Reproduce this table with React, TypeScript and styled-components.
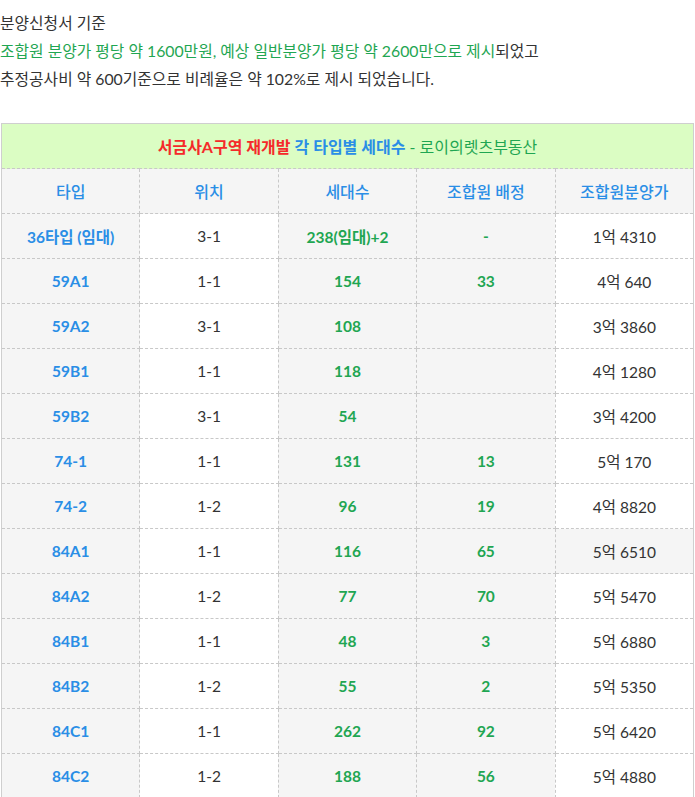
import React from "react";
import styled, { createGlobalStyle } from "styled-components";

const GlobalStyle = createGlobalStyle`
  body {
    margin: 0;
    background: #fff;
    font-family: "Lato", "Noto Sans CJK KR", sans-serif;
    color: #333;
  }
`;

const Page = styled.div`
  padding: 9px 0 0;
`;

const Intro = styled.p`
  margin: 0 0 30px;
  font-size: 15.8px;
  line-height: 28px;
  color: #333;
`;

const Green = styled.span`
  color: #1fa652;
`;

const TableWrap = styled.div`
  padding: 0 1px;
`;

const Table = styled.table`
  width: 100%;
  border-collapse: collapse;
  table-layout: fixed;
  border: 1px solid #cfcfcf;
  font-size: 15.5px;
`;

const TitleCell = styled.td`
  height: 44px;
  background: #dbfdc3;
  text-align: center;
  border-bottom: 1px dashed #c8c8c8;
  padding: 0;
  font-size: 16px;
`;

const Tone = styled.span<{ $c: string; $bold?: boolean }>`
  color: ${(p) => p.$c};
  font-weight: ${(p) => (p.$bold ? 700 : 400)};
`;

const Th = styled.th`
  height: 44px;
  background: #f5f5f5;
  color: #2a8ee6;
  font-weight: 500;
  font-size: 16px;
  border: 1px dashed #c8c8c8;
  border-top: none;
  padding: 0;
`;

type Kind = "type" | "plain" | "num";

const Td = styled.td<{ $kind: Kind; $gray: boolean }>`
  height: 44px;
  text-align: center;
  padding: 0;
  border: 1px dashed #c8c8c8;
  background: ${(p) => (p.$gray ? "#f5f5f5" : "#fff")};
  color: ${(p) =>
    p.$kind === "type" ? "#2a8ee6" : p.$kind === "num" ? "#1fa652" : "#333"};
  font-weight: ${(p) => (p.$kind === "plain" ? 400 : 700)};
`;

const rows: [string, string, string, string, string][] = [
  ["36타입 (임대)", "3-1", "238(임대)+2", "-", "1억 4310"],
  ["59A1", "1-1", "154", "33", "4억 640"],
  ["59A2", "3-1", "108", "", "3억 3860"],
  ["59B1", "1-1", "118", "", "4억 1280"],
  ["59B2", "3-1", "54", "", "3억 4200"],
  ["74-1", "1-1", "131", "13", "5억 170"],
  ["74-2", "1-2", "96", "19", "4억 8820"],
  ["84A1", "1-1", "116", "65", "5억 6510"],
  ["84A2", "1-2", "77", "70", "5억 5470"],
  ["84B1", "1-1", "48", "3", "5억 6880"],
  ["84B2", "1-2", "55", "2", "5억 5350"],
  ["84C1", "1-1", "262", "92", "5억 6420"],
  ["84C2", "1-2", "188", "56", "5억 4880"],
];

const kinds: Kind[] = ["type", "plain", "num", "num", "plain"];
const grayCols = [true, false, true, true, false];

export default function App() {
  return (
    <Page>
      <GlobalStyle />
      <Intro>
        분양신청서 기준
        <br />
        <Green>
          조합원 분양가 평당 약 1600만원, 예상 일반분양가 평당 약 2600만으로 제시
        </Green>
        되었고
        <br />
        추정공사비 약 600기준으로 비례율은 약 102%로 제시 되었습니다.
      </Intro>
      <TableWrap>
        <Table>
          <tbody>
            <tr>
              <TitleCell colSpan={5}>
                <Tone $c="#f52a2a" $bold>
                  서금사A구역 재개발
                </Tone>{" "}
                <Tone $c="#2a8ee6" $bold>
                  각 타입별 세대수
                </Tone>
                <Tone $c="#1fa652"> - 로이의렛츠부동산</Tone>
              </TitleCell>
            </tr>
            <tr>
              <Th>타입</Th>
              <Th>위치</Th>
              <Th>세대수</Th>
              <Th>조합원 배정</Th>
              <Th>조합원분양가</Th>
            </tr>
            {rows.map((r) => (
              <tr key={r[0]}>
                {r.map((v, i) => (
                  <Td
                    key={i}
                    $kind={kinds[i]}
                    $gray={grayCols[i] || (r[0] === "84A1" && i === 4)}
                  >
                    {v}
                  </Td>
                ))}
              </tr>
            ))}
          </tbody>
        </Table>
      </TableWrap>
    </Page>
  );
}
